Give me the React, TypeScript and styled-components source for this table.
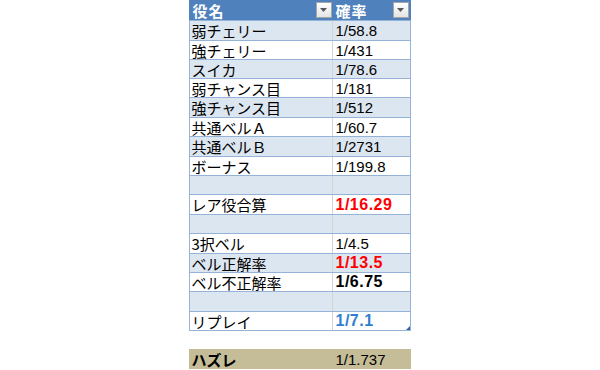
import styled, { createGlobalStyle } from "styled-components";

type Tone = "normal" | "red" | "bold" | "blue";

type RowType = {
  name: string;
  value: string;
  height: number;
  tone?: Tone;
};

const rows: RowType[] = [
  { name: "弱チェリー", value: "1/58.8", height: 20 },
  { name: "強チェリー", value: "1/431", height: 19 },
  { name: "スイカ", value: "1/78.6", height: 19 },
  { name: "弱チャンス目", value: "1/181", height: 19 },
  { name: "強チャンス目", value: "1/512", height: 20 },
  { name: "共通ベルＡ", value: "1/60.7", height: 19 },
  { name: "共通ベルＢ", value: "1/2731", height: 20 },
  { name: "ボーナス", value: "1/199.8", height: 19 },
  { name: "", value: "", height: 19 },
  { name: "レア役合算", value: "1/16.29", height: 20, tone: "red" },
  { name: "", value: "", height: 19 },
  { name: "3択ベル", value: "1/4.5", height: 20 },
  { name: "ベル正解率", value: "1/13.5", height: 19, tone: "red" },
  { name: "ベル不正解率", value: "1/6.75", height: 19, tone: "bold" },
  { name: "", value: "", height: 20 },
  { name: "リプレイ", value: "1/7.1", height: 19, tone: "blue" },
];

const toneColor: Record<Tone, string> = {
  normal: "#000000",
  red: "#ff0000",
  bold: "#000000",
  blue: "#2f7fd0",
};

const GlobalStyle = createGlobalStyle`
  body {
    margin: 0;
    background: #ffffff;
    font-family: "Noto Sans CJK JP", "Liberation Sans", sans-serif;
  }
`;

function FilterButton() {
  return (
    <Filter>
      <svg width="7" height="4" viewBox="0 0 7 4">
        <path d="M0 0 H7 L3.5 4 Z" fill="#595959" />
      </svg>
    </Filter>
  );
}

export default function App() {
  return (
    <>
      <GlobalStyle />
      <Page>
        <Sheet>
          <Table>
            <HeadRow>
              <HeadCell>
                <HeadText>役名</HeadText>
                <FilterButton />
              </HeadCell>
              <HeadCell>
                <HeadText>確率</HeadText>
                <FilterButton />
              </HeadCell>
            </HeadRow>
            {rows.map((row, i) => (
              <Row key={i} $band={i % 2 === 0} $h={row.height}>
                <NameCell>{row.name}</NameCell>
                <ValueCell $tone={row.tone ?? "normal"}>{row.value}</ValueCell>
              </Row>
            ))}
            <Handle />
          </Table>
          <TotalRow>
            <TotalName>ハズレ</TotalName>
            <TotalValue>1/1.737</TotalValue>
          </TotalRow>
        </Sheet>
      </Page>
    </>
  );
}

const Page = styled.div`
  width: 600px;
  height: 370px;
  display: flex;
  justify-content: center;
  overflow: hidden;
`;

const Sheet = styled.div`
  width: 222px;
  margin-left: -1px;
  display: flex;
  flex-direction: column;
`;

const Table = styled.div`
  position: relative;
  border-left: 1px solid #95b3d7;
  border-right: 1px solid #95b3d7;
  border-bottom: 1px solid #95b3d7;
`;

const HeadRow = styled.div`
  display: grid;
  grid-template-columns: 143px 77px;
  height: 20px;
  background: #4f81bd;
  margin: 0 -1px;
  padding: 0 1px;
`;

const HeadCell = styled.div`
  display: flex;
  align-items: center;
  justify-content: space-between;
  padding: 0 1px 0 3px;
`;

const HeadText = styled.span`
  color: #ffffff;
  font-weight: 700;
  font-size: 15px;
  line-height: 18px;
  letter-spacing: 1px;
  padding-top: 1px;
`;

const Filter = styled.div`
  width: 14px;
  height: 14px;
  border: 1px solid #a6a6a6;
  background: linear-gradient(#ffffff, #e4e4e4);
  display: flex;
  align-items: center;
  justify-content: center;
`;

const Row = styled.div<{ $band: boolean; $h: number }>`
  display: grid;
  grid-template-columns: 143px 77px;
  height: ${(p) => p.$h}px;
  box-sizing: border-box;
  border-top: 1px solid #95b3d7;
  background: ${(p) => (p.$band ? "#dce6f1" : "#ffffff")};
`;

const NameCell = styled.div`
  display: flex;
  align-items: center;
  padding-left: 2px;
  border-right: 1px solid #d4d4d4;
  font-size: 15px;
  color: #000000;
  white-space: nowrap;
  overflow: hidden;
`;

const ValueCell = styled.div<{ $tone: Tone }>`
  display: flex;
  align-items: center;
  padding-left: 3px;
  font-family: "Liberation Sans", Arial, sans-serif;
  font-size: ${(p) => (p.$tone === "normal" ? "15px" : "16px")};
  font-weight: ${(p) => (p.$tone === "normal" ? 400 : 700)};
  letter-spacing: ${(p) => (p.$tone === "normal" ? "0" : "0.5px")};
  color: ${(p) => toneColor[p.$tone]};
`;

const Handle = styled.div`
  position: absolute;
  right: 0;
  bottom: 0;
  width: 0;
  height: 0;
  border-left: 4px solid transparent;
  border-bottom: 4px solid #3b5ea8;
`;

const TotalRow = styled.div`
  display: grid;
  grid-template-columns: 144px 78px;
  height: 20px;
  margin-top: 18px;
  background: #c4bd97;
  align-items: center;
`;

const TotalName = styled.div`
  padding-left: 3px;
  font-weight: 700;
  font-size: 15px;
  color: #000000;
`;

const TotalValue = styled.div`
  padding-left: 3px;
  font-family: "Liberation Sans", Arial, sans-serif;
  font-size: 15px;
  color: #000000;
`;
